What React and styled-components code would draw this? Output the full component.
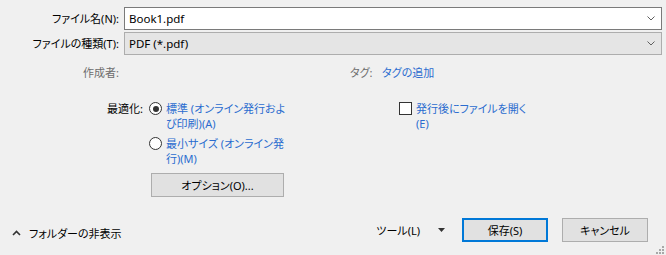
import React from "react";
import styled, { createGlobalStyle } from "styled-components";

const GlobalStyle = createGlobalStyle`
  html, body {
    margin: 0;
    background: #f0f0f0;
  }
  body {
    font-family: "Noto Sans", "Noto Sans CJK JP", sans-serif;
    font-size: 11px;
    font-feature-settings: "palt";
    color: #000;
  }
`;

const Chevron = () => (
    <svg width="8" height="5" viewBox="0 0 8 5">
        <path d="M0.5 0.5 L4 4 L7.5 0.5" stroke="#606060" strokeWidth="1" fill="none" />
    </svg>
);

const App = () => {
    return (
        <>
        <GlobalStyle />
        <Dialog>
            <FieldGrid>
                <FieldLabel>ファイル名(N):</FieldLabel>
                <Combo $editable>
                    <span>Book1.pdf</span>
                    <Chevron />
                </Combo>
                <FieldLabel>ファイルの種類(T):</FieldLabel>
                <Combo>
                    <span>PDF (*.pdf)</span>
                    <Chevron />
                </Combo>
            </FieldGrid>

            <MetaRow>
                <MetaLabel>作成者:</MetaLabel>
                <span />
                <MetaLabel $left>タグ:</MetaLabel>
                <LinkText>タグの追加</LinkText>
            </MetaRow>

            <OptionsGrid>
                <FieldLabel>最適化:</FieldLabel>
                <RadioGroup>
                    <ChoiceItem>
                        <Radio $checked />
                        <LinkText>標準 (オンライン発行およ<br />び印刷)(A)</LinkText>
                    </ChoiceItem>
                    <ChoiceItem>
                        <Radio />
                        <LinkText>最小サイズ (オンライン発<br />行)(M)</LinkText>
                    </ChoiceItem>
                    <OptionButton type="button">オプション(O)...</OptionButton>
                </RadioGroup>
                <ChoiceItem>
                    <Checkbox />
                    <LinkText>発行後にファイルを開く<br />(E)</LinkText>
                </ChoiceItem>
            </OptionsGrid>

            <Footer>
                <FolderToggle>
                    <svg width="9" height="6" viewBox="0 0 9 6">
                        <path d="M1 5 L4.5 1.5 L8 5" stroke="#333" strokeWidth="1.6" fill="none" />
                    </svg>
                    <span>フォルダーの非表示</span>
                </FolderToggle>
                <Spacer />
                <Tools>
                    <span>ツール(L)</span>
                    <svg width="7" height="4" viewBox="0 0 7 4">
                        <path d="M0 0 L7 0 L3.5 4 Z" fill="#333" />
                    </svg>
                </Tools>
                <DialogButton type="button" $primary>保存(S)</DialogButton>
                <DialogButton type="button">キャンセル</DialogButton>
            </Footer>

            <Grip width="9" height="9" viewBox="0 0 9 9">
                <rect x="7" y="1" width="2" height="2" fill="#a8a8a8" />
                <rect x="4" y="4" width="2" height="2" fill="#a8a8a8" />
                <rect x="7" y="4" width="2" height="2" fill="#a8a8a8" />
                <rect x="1" y="7" width="2" height="2" fill="#a8a8a8" />
                <rect x="4" y="7" width="2" height="2" fill="#a8a8a8" />
                <rect x="7" y="7" width="2" height="2" fill="#a8a8a8" />
            </Grip>
        </Dialog>
        </>
    );
};

const Dialog = styled.div`
position: relative;
width: 666px;
height: 255px;
box-sizing: border-box;
display: flex;
flex-direction: column;
background: #f0f0f0;
`;

const FieldGrid = styled.div`
display: grid;
grid-template-columns: 119px 538px;
column-gap: 5px;
row-gap: 2px;
padding-top: 7px;
align-items: center;
`;

const FieldLabel = styled.div`
text-align: right;
white-space: nowrap;
line-height: 15px;
color: #000;
`;

const Combo = styled.div`
height: 23px;
box-sizing: border-box;
display: flex;
align-items: center;
justify-content: space-between;
padding: 0 6px 0 4px;
border: 1px solid ${(p) => (p.$editable ? "#7a7a7a" : "#adadad")};
background: ${(p) => (p.$editable ? "#ffffff" : "#e5e5e5")};
font-size: 11.5px;
line-height: 15px;
`;

const MetaRow = styled.div`
display: grid;
grid-template-columns: 119px 231px 32px auto;
margin-top: 10px;
line-height: 15px;
white-space: nowrap;
`;

const MetaLabel = styled.div`
color: #6d6d6d;
text-align: ${(p) => (p.$left ? "left" : "right")};
`;

const LinkText = styled.span`
color: #2a6ccf;
line-height: 15px;
white-space: nowrap;
`;

const OptionsGrid = styled.div`
display: grid;
grid-template-columns: 143px 244px auto;
column-gap: 6px;
margin-top: 21px;
align-items: start;
`;

const RadioGroup = styled.div`
display: flex;
flex-direction: column;
align-items: flex-start;
gap: 5px;
`;

const ChoiceItem = styled.div`
display: flex;
align-items: flex-start;
gap: 4px;
line-height: 15px;
`;

const Radio = styled.span`
position: relative;
flex-shrink: 0;
width: 13px;
height: 13px;
margin-top: 1px;
box-sizing: border-box;
border: 1px solid #333;
border-radius: 50%;
background: #fff;
&::after{
    content: "";
    display: ${(p) => (p.$checked ? "block" : "none")};
    position: absolute;
    left: 2.5px;
    top: 2.5px;
    width: 6px;
    height: 6px;
    border-radius: 50%;
    background: #333;
}
`;

const Checkbox = styled.span`
flex-shrink: 0;
width: 13px;
height: 13px;
margin-top: 1px;
box-sizing: border-box;
border: 1px solid #333;
background: #fff;
`;

const OptionButton = styled.button`
margin-top: 2px;
margin-left: 2px;
width: 133px;
height: 24px;
box-sizing: border-box;
border: 1px solid #adadad;
background: #e1e1e1;
font: inherit;
color: #000;
padding: 0;
`;

const Footer = styled.div`
display: flex;
align-items: center;
margin-top: 21px;
padding: 0 18px 0 12px;
height: 24px;
`;

const FolderToggle = styled.div`
display: flex;
align-items: center;
gap: 8px;
margin-top: 6px;
line-height: 15px;
white-space: nowrap;
`;

const Spacer = styled.div`
flex: 1;
`;

const Tools = styled.div`
display: flex;
align-items: center;
gap: 18px;
margin-right: 17px;
white-space: nowrap;
line-height: 15px;
`;

const DialogButton = styled.button`
width: 86px;
height: 24px;
box-sizing: border-box;
padding: 0;
font: inherit;
color: #000;
background: #e1e1e1;
border: ${(p) => (p.$primary ? "2px solid #0078d7" : "1px solid #adadad")};
margin-left: ${(p) => (p.$primary ? "0" : "14px")};
`;

const Grip = styled.svg`
position: absolute;
right: 2px;
bottom: 1px;
`;

export default App;
